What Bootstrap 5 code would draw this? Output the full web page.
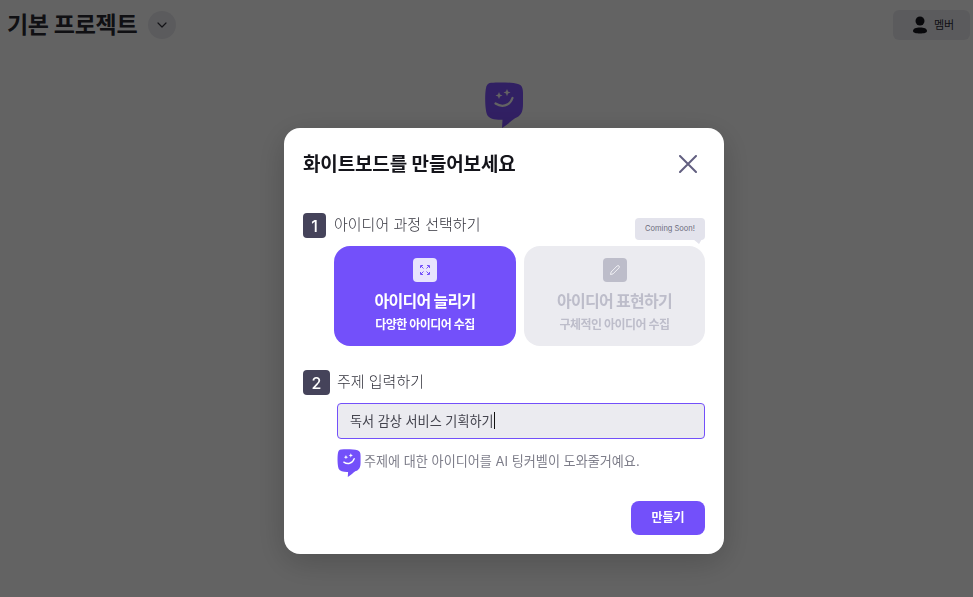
<!DOCTYPE html>
<html lang="ko">
<head>
  <meta charset="UTF-8" />
  <meta name="viewport" content="width=device-width, initial-scale=1.0" />
  <title>화이트보드 만들기</title>

  <link href="https://cdn.jsdelivr.net/npm/bootstrap@5.3.3/dist/css/bootstrap.min.css" rel="stylesheet">

  <style>
    body {
      font-family: "Inter", "Noto Sans CJK KR", sans-serif;
      background: #fff;
      height: 597px;
      overflow: hidden;
    }

    .project-bar { padding: 10px 3px 0 7px; }
    .project-title { font-size: 23px; font-weight: 700; line-height: 30px; color: #2a2a32; letter-spacing: -.3px; }
    .chevron-btn { width: 28px; height: 28px; margin-left: 11px; background: #ebebf0; color: #33333d; padding: 0; }
    .member-btn { width: 77px; height: 30px; background: #ebebf0; border-radius: 6px; font-size: 11px; color: #2c2c36; gap: 7px; padding-left: 4px; }
    .logo-slot { padding-left: 35px; }
    .empty-logo { width: 38px; height: 46px; margin-top: 42px; color: #7f52ff; --logo-cut: #fff; }

    .modal-backdrop.show { opacity: .61; }
    .board-dialog { max-width: 440px; width: 440px; margin: 128px 0 0 284px; }
    .board-content { height: 426px; border: 0; border-radius: 16px; padding: 0 19px; box-shadow: 0 8px 32px rgba(0,0,0,.2); }
    .board-head { height: 72px; }
    .board-title { font-size: 19px; font-weight: 600; line-height: 24px; color: #15151b; letter-spacing: -.15px; margin: 2px 0 0; }
    .close-x { background: none; border: 0; padding: 0; width: 18px; height: 18px; margin-right: 8px; line-height: 0; }

    .step-one { margin-top: 13px; height: 25px; }
    .step-two { margin-top: 24px; height: 25px; }
    .step-num { width: 23px; height: 25px; background: #45435a; color: #fff; border-radius: 4px; font-size: 16px; font-weight: 500; }
    .step-two .step-num { width: 27px; }
    .step-label { font-size: 15px; font-weight: 300; color: #33333d; margin-left: 8px; }
    .step-two .step-label { margin-left: 7px; }

    .soon-tip { right: 0; top: 18px; width: 70px; height: 22px; background: #e3e3ec; color: #6b6b7b; font-size: 7.500px; border-radius: 4px; }
    .soon-tip::after { content: ""; position: absolute; right: 3px; bottom: -4px; border-top: 5px solid #e3e3ec; border-left: 6px solid transparent; border-right: 3px solid transparent; }

    .mode-row { margin: 8px 0 0 31px; gap: 8px; }
    .mode-card { height: 100px; border-radius: 16px; padding-top: 12px; flex: 0 0 182px; }
    .mode-card + .mode-card { flex-basis: 181px; }
    .mode-on { background: #7350fa; color: #fff; }
    .mode-off { background: #ebebf0; color: #bdbdca; }
    .mode-icon { width: 24px; height: 24px; border-radius: 4px; }
    .mode-on .mode-icon { background: #e8e3fd; }
    .mode-off .mode-icon { background: #bdbdca; }
    .mode-name { font-size: 16px; font-weight: 700; line-height: 22px; margin-top: 8px; letter-spacing: -.7px; }
    .mode-sub { font-size: 12px; font-weight: 700; line-height: 16px; margin-top: 5px; letter-spacing: -.5px; }

    .topic-wrap { margin: 8px 0 0 34px; }
    .topic-field { height: 36px; background: #ebebf0; border: 1px solid #7350fa; border-radius: 4px; padding: 0 12px; font-size: 13.100px; color: #44444e; line-height: 34px; }
    .caret-mark { display: inline-block; width: 1px; height: 17px; background: #111; vertical-align: -3px; }
    .topic-hint { margin-top: 10px; font-size: 13.100px; color: #7e7e8a; gap: 3px; }
    .hint-logo { width: 24px; height: 28px; color: #7350fa; --logo-cut: #fff; }
    .hint-copy { margin-top: -3px; }

    .make-btn { width: 74px; height: 34px; background: #7350fa; border: 0; border-radius: 8px; color: #fff; font-size: 12px; font-weight: 700; padding: 0; margin-top: 24px; }
    .make-btn:hover { background: #7350fa; color: #fff; }
  </style>
</head>
<body>

  <svg width="0" height="0" class="position-absolute">
    <symbol id="logo-mark" viewBox="0 0 38 46">
      <path fill="currentColor" d="M6 .8C14 0 27 .3 33 2c3.500 1 5 3.500 5 9v11c0 8-2 12-8 14.300-4 2.700-8 6.700-13 9.700l.5-8.200C10 38 4 37 2 32.500 0 27-.3 14 .8 7 1.300 3 3 1.200 6 .8Z"/>
      <path fill="var(--logo-cut)" d="M14 10l1 2.500 2.500 1-2.500 1-1 2.500-1-2.500-2.500-1 2.500-1ZM22 7l1 2.600 2.500 1-2.500 1-1 2.600-1-2.600-2.500-1 2.500-1Z"/>
      <path fill="none" stroke="var(--logo-cut)" stroke-width="2.200" stroke-linecap="round" d="M10.500 21.500c6 4 14 3 17-5.500"/>
    </symbol>
  </svg>

  <!-- Page behind the dialog -->
  <header class="project-bar d-flex align-items-center justify-content-between">
    <div class="d-flex align-items-center">
      <h1 class="project-title m-0">기본 프로젝트</h1>
      <button type="button" class="chevron-btn btn rounded-circle d-flex align-items-center justify-content-center">
        <svg width="10" height="6" viewBox="0 0 10 6" fill="none" stroke="currentColor" stroke-width="1.200" stroke-linecap="round" stroke-linejoin="round"><path d="M1 1l4 4 4-4"/></svg>
      </button>
    </div>
    <div class="member-btn d-flex align-items-center justify-content-center">
      <svg width="14" height="18" viewBox="0 0 14 18" fill="#17171d"><circle cx="7" cy="5" r="4.500"/><path d="M0 15c0-2.500 3-3.500 7-3.500s7 1 7 3.500c0 1.800-3 2.500-7 2.500S0 16.800 0 15Z"/></svg>
      <span>멤버</span>
    </div>
  </header>
  <div class="logo-slot d-flex justify-content-center">
    <svg class="empty-logo"><use href="#logo-mark"/></svg>
  </div>

  <div class="modal-backdrop show"></div>

  <!-- Create whiteboard dialog -->
  <div class="modal d-block" tabindex="-1">
    <div class="modal-dialog board-dialog">
      <div class="modal-content board-content">
        <div class="board-head d-flex align-items-center justify-content-between">
          <h2 class="board-title">화이트보드를 만들어보세요</h2>
          <button type="button" class="close-x" aria-label="닫기">
            <svg width="18" height="18" viewBox="0 0 18 18" fill="none" stroke="#625f80" stroke-width="2" stroke-linecap="round"><path d="M1 1l16 16M17 1L1 17"/></svg>
          </button>
        </div>

        <div class="position-relative">
          <div class="step-one d-flex align-items-center">
            <span class="step-num d-flex align-items-center justify-content-center">1</span>
            <span class="step-label">아이디어 과정 선택하기</span>
          </div>
          <div class="soon-tip position-absolute d-flex align-items-center justify-content-center">Coming Soon!</div>
          <div class="mode-row d-flex">
            <div class="mode-card mode-on d-flex flex-column align-items-center">
              <div class="mode-icon d-flex align-items-center justify-content-center">
                <svg width="10" height="10" viewBox="0 0 10 10" fill="none" stroke="#7350fa" stroke-width="1"><path d="M.5 3V.5H3M7 .5h2.500V3M9.500 7v2.500H7M3 9.500H.5V7M1 1l2.500 2.500M9 1L6.500 3.500M9 9L6.500 6.500M1 9l2.500-2.500"/></svg>
              </div>
              <div class="mode-name">아이디어 늘리기</div>
              <div class="mode-sub">다양한 아이디어 수집</div>
            </div>
            <div class="mode-card mode-off d-flex flex-column align-items-center">
              <div class="mode-icon d-flex align-items-center justify-content-center">
                <svg width="12" height="12" viewBox="0 0 12 12" fill="none" stroke="#f1f1f5" stroke-width="1"><path d="M1.500 10.500l.6-2.500 6-6a1.200 1.200 0 0 1 1.900 1.900l-6 6Z"/></svg>
              </div>
              <div class="mode-name">아이디어 표현하기</div>
              <div class="mode-sub">구체적인 아이디어 수집</div>
            </div>
          </div>
        </div>

        <div class="step-two d-flex align-items-center">
          <span class="step-num d-flex align-items-center justify-content-center">2</span>
          <span class="step-label">주제 입력하기</span>
        </div>
        <div class="topic-wrap">
          <div class="topic-field">독서 감상 서비스 기획하기<span class="caret-mark"></span></div>
          <div class="topic-hint d-flex align-items-center">
            <svg class="hint-logo"><use href="#logo-mark"/></svg>
            <span class="hint-copy">주제에 대한 아이디어를 AI 팅커벨이 도와줄거예요.</span>
          </div>
        </div>

        <div class="d-flex justify-content-end">
          <button type="button" class="make-btn btn">만들기</button>
        </div>
      </div>
    </div>
  </div>

  <script src="https://cdn.jsdelivr.net/npm/bootstrap@5.3.3/dist/js/bootstrap.bundle.min.js"></script>
</body>
</html>
